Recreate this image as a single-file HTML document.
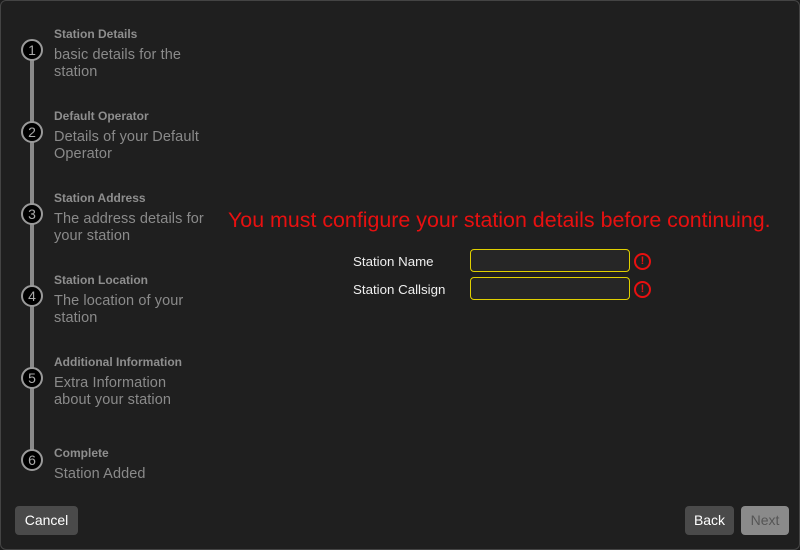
<!DOCTYPE html>
<html><head><style>
body{margin:0;background:#1c1c1c;font-family:"Liberation Sans",sans-serif;}
.win{position:absolute;left:0;top:0;width:798px;height:548px;border:1px solid #444;border-radius:6px;background:#1f1f1f;overflow:hidden}
.line{position:absolute;left:29px;top:50px;width:4px;height:410px;background:#8a8a8a}
.c{position:absolute;left:20px;width:18px;height:18px;border:2px solid #9a9a9a;border-radius:50%;background:#000;color:#aaa;font-size:14px;text-align:center;line-height:18px}
.t{position:absolute;left:53px;color:#8e8e8e;font-size:12px;font-weight:bold}
.d{position:absolute;left:53px;color:#8a8a8a;font-size:14.5px;line-height:17px;white-space:nowrap;letter-spacing:0.1px}
.err{position:absolute;left:227px;top:207px;color:#e81010;font-size:21.4px;white-space:nowrap}
.lab{position:absolute;left:352px;color:#eee;font-size:13.3px}
.in{position:absolute;left:469px;width:158px;height:21px;border:1px solid #e0d000;border-radius:4px;background:#262626}
.ex{position:absolute;left:633px;width:13px;height:13px;border:2px solid #e81010;border-radius:50%;color:#e81010;font-size:11px;font-weight:bold;text-align:center;line-height:13px}
.b{position:absolute;top:505px;height:29px;border-radius:4px;background:#4a4a4a;color:#fff;font-size:14px;text-align:center;line-height:29px}
</style></head><body><div class="win">
<div class="line"></div>
<div class="c" style="top:38px">1</div><div class="t" style="top:26px">Station Details</div><div class="d" style="top:46px">basic details for the<br>station</div>
<div class="c" style="top:120px">2</div><div class="t" style="top:108px">Default Operator</div><div class="d" style="top:128px">Details of your Default<br>Operator</div>
<div class="c" style="top:202px">3</div><div class="t" style="top:190px">Station Address</div><div class="d" style="top:210px">The address details for<br>your station</div>
<div class="c" style="top:284px">4</div><div class="t" style="top:272px">Station Location</div><div class="d" style="top:292px">The location of your<br>station</div>
<div class="c" style="top:366px">5</div><div class="t" style="top:354px">Additional Information</div><div class="d" style="top:374px">Extra Information<br>about your station</div>
<div class="c" style="top:448px">6</div><div class="t" style="top:445px">Complete</div><div class="d" style="top:465px">Station Added</div>
<div class="err">You must configure your station details before continuing.</div>
<div class="lab" style="top:253px">Station Name</div><div class="in" style="top:248px"></div><div class="ex" style="top:252px">!</div>
<div class="lab" style="top:281px">Station Callsign</div><div class="in" style="top:276px"></div><div class="ex" style="top:280px">!</div>
<div class="b" style="left:14px;width:63px">Cancel</div>
<div class="b" style="left:684px;width:49px">Back</div>
<div class="b" style="left:740px;width:48px;background:#8a8a8a;color:#555">Next</div>
</div></body></html>
